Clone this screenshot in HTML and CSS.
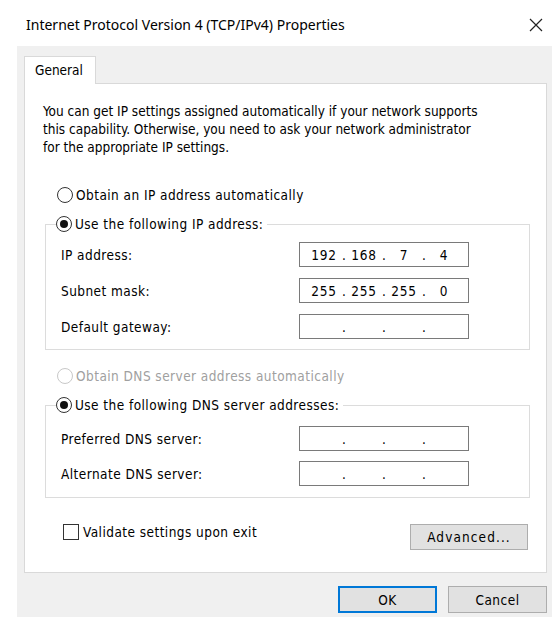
FILE: index.html
```html
<!DOCTYPE html>
<html lang="en">
<head>
    <meta charset="UTF-8">
    <meta name="viewport" content="width=device-width, initial-scale=1.0">
    <title>Internet Protocol Version 4 (TCP/IPv4) Properties</title>
    <link rel="stylesheet" href="styles.css">
</head>
<body>
    <div class="dialog">
        <div class="titlebar">
            <span class="title">Internet Protocol Version 4 (TCP/IPv4) Properties</span>
            <svg class="close" width="14" height="14" viewBox="0 0 14 14">
                <path d="M1 1 L13 13 M13 1 L1 13" stroke="#222" stroke-width="1.2" fill="none"/>
            </svg>
        </div>

        <div class="frame">
            <div class="tabs">
                <div class="tab">General</div>
            </div>

            <div class="page">
                <p class="intro">You can get IP settings assigned automatically if your network supports this capability. Otherwise, you need to ask your network administrator for the appropriate IP settings.</p>

                <div class="option">
                    <span class="radio"></span>Obtain an IP address automatically
                </div>

                <fieldset class="group">
                    <legend class="option"><span class="radio checked"></span>Use the following IP address:</legend>
                    <div class="field-row">
                        <span class="field-label">IP address:</span>
                        <div class="ip-box"><span>192</span>.<span>168</span>.<span>7</span>.<span>4</span></div>
                    </div>
                    <div class="field-row">
                        <span class="field-label">Subnet mask:</span>
                        <div class="ip-box"><span>255</span>.<span>255</span>.<span>255</span>.<span>0</span></div>
                    </div>
                    <div class="field-row">
                        <span class="field-label">Default gateway:</span>
                        <div class="ip-box"><span></span>.<span></span>.<span></span>.<span></span></div>
                    </div>
                </fieldset>

                <div class="option disabled dns-auto">
                    <span class="radio"></span>Obtain DNS server address automatically
                </div>

                <fieldset class="group group-dns">
                    <legend class="option"><span class="radio checked"></span>Use the following DNS server addresses:</legend>
                    <div class="field-row">
                        <span class="field-label">Preferred DNS server:</span>
                        <div class="ip-box"><span></span>.<span></span>.<span></span>.<span></span></div>
                    </div>
                    <div class="field-row">
                        <span class="field-label">Alternate DNS server:</span>
                        <div class="ip-box"><span></span>.<span></span>.<span></span>.<span></span></div>
                    </div>
                </fieldset>

                <div class="bottom-row">
                    <div class="option check-option"><span class="checkbox"></span>Validate settings upon exit</div>
                    <button class="btn btn-advanced">Advanced...</button>
                </div>
            </div>

            <div class="actions">
                <button class="btn btn-default">OK</button>
                <button class="btn">Cancel</button>
            </div>
        </div>
    </div>
</body>
</html>
```

FILE: styles.css
```css
body {
    margin: 0;
    background-color: #ffffff;
    font-family: "DejaVu Sans Condensed", "Liberation Sans", sans-serif;
    font-size: 13.5px;
    color: #000000;
}
.dialog {
    width: 560px;
    height: 625px;
}
.titlebar {
    height: 46px;
    display: flex;
    align-items: center;
    justify-content: space-between;
    padding: 3px 17px 0 26px;
    box-sizing: border-box;
}
.title {
    font-family: "Noto Sans", sans-serif;
    font-size: 14px;
    color: #000000;
}
.close {
    display: block;
}
.frame {
    margin-left: 17px;
    width: 535px;
    height: 571px;
    background-color: #f0f0f0;
    padding: 10px 5px 0 7px;
    box-sizing: border-box;
}
.tabs {
    display: flex;
    height: 27px;
}
.tab {
    width: 72px;
    box-sizing: border-box;
    background-color: #ffffff;
    border: 1px solid #d9d9d9;
    border-bottom: none;
    padding: 5px 0 0 10px;
    position: relative;
    z-index: 1;
    height: 28px;
}
.page {
    background-color: #ffffff;
    border: 1px solid #d9d9d9;
    height: 490px;
    box-sizing: border-box;
    padding: 18px 16px 0 18px;
}
.intro {
    margin: 0;
    line-height: 18px;
    width: 445px;
}
.option {
    display: flex;
    align-items: center;
    height: 20px;
    white-space: nowrap;
    letter-spacing: 0.45px;
}
.page > .option:first-of-type {
    margin: 29px 0 0 14px;
}
.radio {
    width: 14px;
    height: 14px;
    border: 1px solid #333333;
    border-radius: 50%;
    margin-right: 3px;
    box-sizing: content-box;
    display: flex;
    align-items: center;
    justify-content: center;
    background-color: #ffffff;
}
.radio.checked::after {
    content: "";
    width: 8px;
    height: 8px;
    border-radius: 50%;
    background-color: #111111;
}
.disabled {
    color: #a0a0a0;
}
.disabled .radio {
    border-color: #c8c8c8;
}
.group {
    margin: 9px 0 0 2px;
    width: 485px;
    box-sizing: border-box;
    border: 1px solid #dcdcdc;
    padding: 0 0 10px 15px;
}
.group legend {
    padding: 0 4px 0 0;
    margin-left: -5px;
}
.field-row {
    display: flex;
    align-items: center;
    height: 25px;
    margin-top: 11px;
}
.group legend + .field-row {
    margin-top: 8px;
}
.group-dns {
    padding-bottom: 11px;
}
.group-dns legend + .field-row {
    margin-top: 11px;
}
.group-dns .field-row + .field-row {
    margin-top: 10px;
}
.field-label {
    width: 238px;
    letter-spacing: 0.45px;
}
.ip-box {
    width: 170px;
    height: 25px;
    box-sizing: border-box;
    border: 1px solid #7a7a7a;
    display: flex;
    align-items: center;
    padding: 0 6px 0 6px;
}
.ip-box span {
    flex: 1;
    text-align: center;
    letter-spacing: 0.8px;
}
.dns-auto {
    margin: 16px 0 0 14px;
}
.bottom-row {
    display: flex;
    justify-content: space-between;
    align-items: flex-start;
    margin: 26px 2px 0 20px;
}
.check-option {
    margin-top: -2px;
}
.checkbox {
    width: 14px;
    height: 14px;
    border: 1px solid #333333;
    margin-right: 4px;
    background-color: #ffffff;
}
.btn {
    font-family: inherit;
    font-size: 13.5px;
    color: #000000;
    background-color: #e1e1e1;
    border: 1px solid #adadad;
    height: 27px;
    padding: 0;
    letter-spacing: 0.5px;
}
.btn-advanced {
    width: 118px;
    height: 26px;
    letter-spacing: 1.1px;
}
.actions {
    display: flex;
    justify-content: flex-end;
    gap: 11px;
    margin-top: 13px;
}
.actions .btn {
    width: 99px;
}
.btn-default {
    border: 2px solid #0078d7;
}
```
